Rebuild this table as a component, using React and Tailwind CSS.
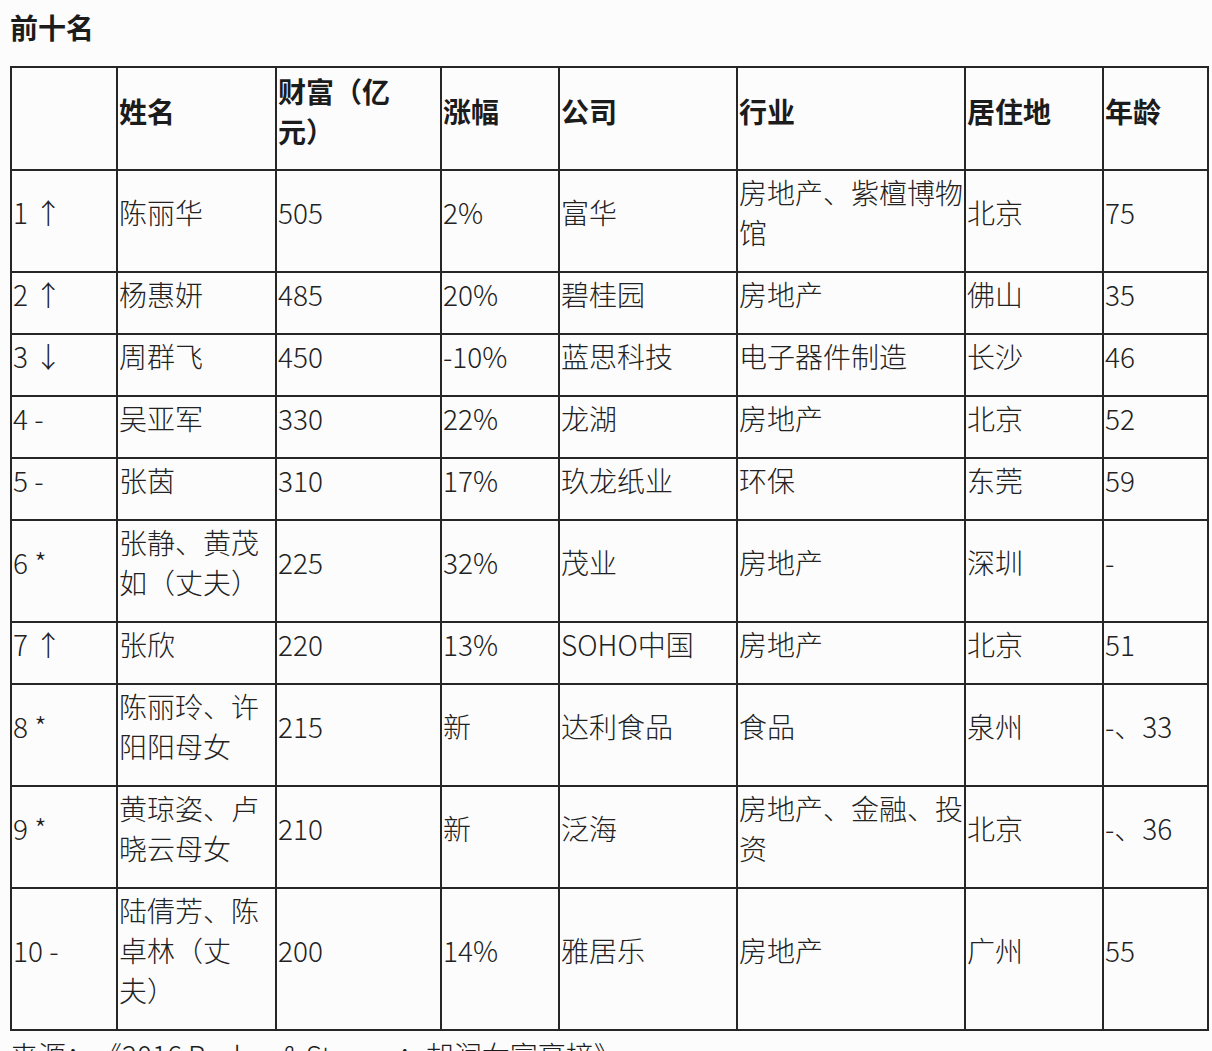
import React from "react";

const rows = [
  ["1 ↑", "陈丽华", "505", "2%", "富华", "房地产、紫檀博物馆", "北京", "75"],
  ["2 ↑", "杨惠妍", "485", "20%", "碧桂园", "房地产", "佛山", "35"],
  ["3 ↓", "周群飞", "450", "-10%", "蓝思科技", "电子器件制造", "长沙", "46"],
  ["4 -", "吴亚军", "330", "22%", "龙湖", "房地产", "北京", "52"],
  ["5 -", "张茵", "310", "17%", "玖龙纸业", "环保", "东莞", "59"],
  ["6 *", "张静、黄茂如（丈夫）", "225", "32%", "茂业", "房地产", "深圳", "-"],
  ["7 ↑", "张欣", "220", "13%", "SOHO中国", "房地产", "北京", "51"],
  ["8 *", "陈丽玲、许阳阳母女", "215", "新", "达利食品", "食品", "泉州", "-、33"],
  ["9 *", "黄琼姿、卢晓云母女", "210", "新", "泛海", "房地产、金融、投资", "北京", "-、36"],
  ["10 -", "陆倩芳、陈卓林（丈夫）", "200", "14%", "雅居乐", "房地产", "广州", "55"],
];

const widths = [106, 159, 165, 118, 178, 228, 138, 105];

export default function App() {
  const font = { fontFamily: '"Noto Sans CJK SC", "Noto Sans", sans-serif' };
  return (
    <div
      className="min-h-[1051px] w-[1212px] overflow-hidden bg-[#fcfcfd] text-[#1c1c1c] [text-spacing-trim:space-all]"
      style={font}
    >
      <div className="pl-[10px] pt-[8px] text-[28px] font-bold leading-[38px]">前十名</div>
      <table className="ml-[10px] mt-[20px] w-[1197px] table-fixed border-collapse">
        <colgroup>
          {widths.map((w, i) => (
            <col key={i} style={{ width: w }} />
          ))}
        </colgroup>
        <thead>
          <tr>
            {["", "姓名", null, "涨幅", "公司", "行业", "居住地", "年龄"].map((h, i) => (
              <th
                key={i}
                className="border-2 border-[#262626] pb-[18px] pl-[1px] pr-0 pt-[3px] text-left align-middle text-[28px] font-bold leading-[40px]"
              >
                {h === null ? (
                  <>
                    财富（亿
                    <br />
                    元）
                  </>
                ) : (
                  h
                )}
              </th>
            ))}
          </tr>
        </thead>
        <tbody>
          {rows.map((r, ri) => (
            <tr key={ri}>
              {r.map((c, ci) => (
                <td
                  key={ci}
                  className="border-2 border-[#262626] pb-[19px] pl-[1px] pr-0 pt-[1px] text-left align-middle text-[28px] font-light leading-[40px] text-[#222]"
                >
                  {c}
                </td>
              ))}
            </tr>
          ))}
        </tbody>
      </table>
      <div className="pl-[10px] pt-[4px] text-[28px] font-light leading-[40px]">
        来源：《2016 Peckes &amp; Strauss：胡润女富豪榜》
      </div>
    </div>
  );
}
